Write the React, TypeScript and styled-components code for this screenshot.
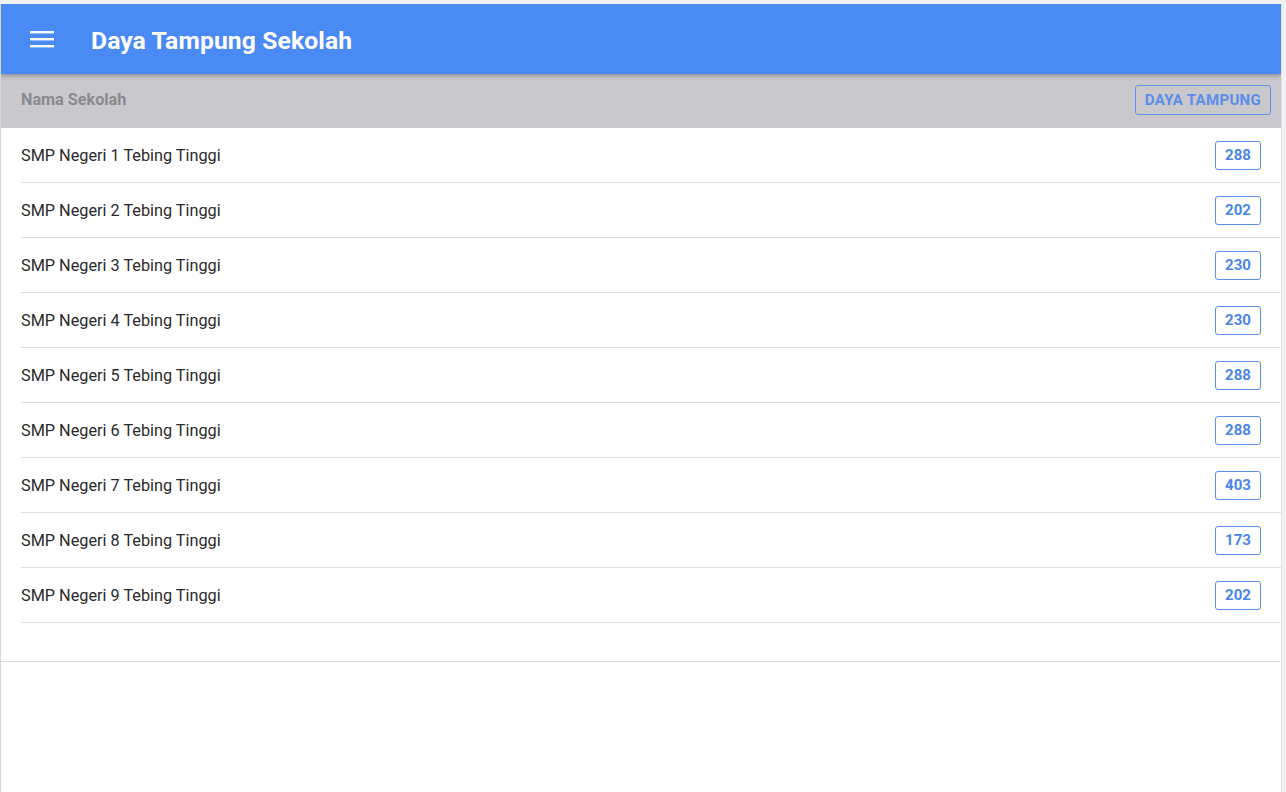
import React from "react";
import styled, { createGlobalStyle } from "styled-components";

const GlobalStyle = createGlobalStyle`
  html, body {
    margin: 0;
    padding: 0;
    background: #f1f1f3;
    font-family: Roboto, "Liberation Sans", sans-serif;
  }
`;

const Frame = styled.div`
  margin: 4px 4px 0 0;
  height: 788px;
  background: #ffffff;
  border-left: 1px solid #d6d6d8;
  border-right: 1px solid #e2e2e4;
  display: flex;
  flex-direction: column;
  overflow: hidden;
`;

const Toolbar = styled.header`
  height: 70px;
  flex-shrink: 0;
  background: #4a8af4;
  display: flex;
  align-items: center;
  padding-left: 28px;
  box-shadow: 0 2px 4px rgba(0, 0, 0, 0.28);
  position: relative;
  z-index: 2;
`;

const MenuButton = styled.button`
  width: 26px;
  height: 26px;
  padding: 0;
  border: none;
  background: none;
  display: flex;
  align-items: center;
  justify-content: center;
  margin-right: 36px;
`;

const Title = styled.h1`
  margin: 2px 0 0;
  color: #ffffff;
  font-size: 24.7px;
  font-weight: 700;
  letter-spacing: 0.1px;
`;

const ListHeader = styled.div`
  height: 54px;
  box-sizing: border-box;
  flex-shrink: 0;
  background: #c9c8cd;
  display: flex;
  align-items: center;
  justify-content: space-between;
  padding: 0 10px 3px 20px;
`;

const HeaderLabel = styled.span`
  color: #8a8a8e;
  font-size: 16.2px;
  font-weight: 700;
`;

const OutlineButton = styled.button`
  height: 30px;
  padding: 0 9px;
  border: 1px solid #5f92ea;
  border-radius: 3px;
  background: transparent;
  color: #5b8ee9;
  font-family: Roboto, "Liberation Sans", sans-serif;
  font-size: 15px;
  font-weight: 700;
  letter-spacing: 0.3px;
`;

const List = styled.ul`
  list-style: none;
  margin: 0;
  padding: 0 0 0 20px;
  border-bottom: 1px solid #dedede;
`;

const Item = styled.li`
  height: 54px;
  display: flex;
  align-items: center;
  justify-content: space-between;
  padding-right: 20px;
  border-bottom: 1px solid #dedede;
  color: #2a2a2a;
  font-size: 16.25px;
`;

const Spacer = styled.li`
  height: 38px;
`;

const Badge = styled.span`
  min-width: 44px;
  height: 27px;
  box-sizing: content-box;
  display: flex;
  align-items: center;
  justify-content: center;
  border: 1px solid #5a8fe9;
  border-radius: 3px;
  color: #4a86e8;
  font-size: 15px;
  font-weight: 700;
`;

const schools: [string, number][] = [
  ["SMP Negeri 1 Tebing Tinggi", 288],
  ["SMP Negeri 2 Tebing Tinggi", 202],
  ["SMP Negeri 3 Tebing Tinggi", 230],
  ["SMP Negeri 4 Tebing Tinggi", 230],
  ["SMP Negeri 5 Tebing Tinggi", 288],
  ["SMP Negeri 6 Tebing Tinggi", 288],
  ["SMP Negeri 7 Tebing Tinggi", 403],
  ["SMP Negeri 8 Tebing Tinggi", 173],
  ["SMP Negeri 9 Tebing Tinggi", 202],
];

export default function App() {
  return (
    <>
      <GlobalStyle />
      <Frame>
        <Toolbar>
          <MenuButton aria-label="menu">
            <svg width="26" height="20" viewBox="0 0 26 20">
              <rect x="1" y="2" width="24" height="2.4" fill="#fff" />
              <rect x="1" y="9" width="24" height="2.4" fill="#fff" />
              <rect x="1" y="16" width="24" height="2.4" fill="#fff" />
            </svg>
          </MenuButton>
          <Title>Daya Tampung Sekolah</Title>
        </Toolbar>
        <ListHeader>
          <HeaderLabel>Nama Sekolah</HeaderLabel>
          <OutlineButton>DAYA TAMPUNG</OutlineButton>
        </ListHeader>
        <List>
          {schools.map(([name, count]) => (
            <Item key={name}>
              {name}
              <Badge>{count}</Badge>
            </Item>
          ))}
          <Spacer />
        </List>
      </Frame>
    </>
  );
}
